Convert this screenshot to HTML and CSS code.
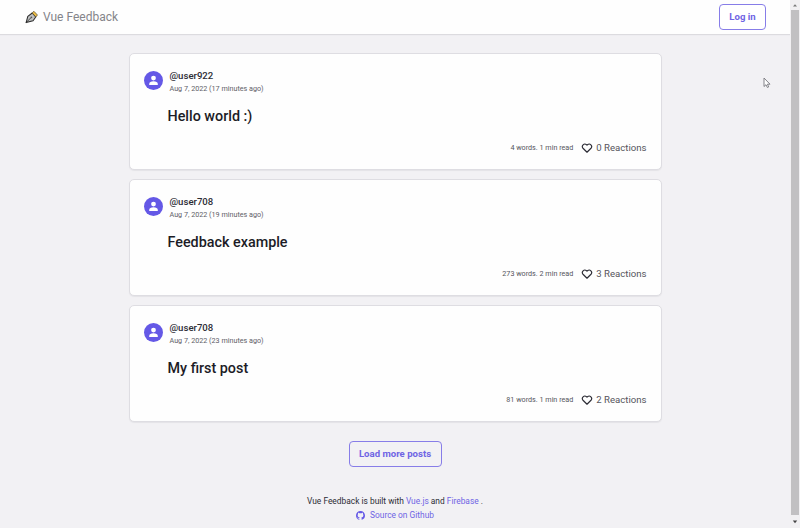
FILE: index.html
```html
<!DOCTYPE html>
<html lang="en">
<head>
<meta charset="utf-8">
<title>Vue Feedback</title>
<link rel="stylesheet" href="styles.css">
</head>
<body>
<svg class="defs" width="0" height="0">
  <symbol id="user" viewBox="0 0 19 19">
    <circle cx="9.5" cy="9.5" r="9.5" fill="#6458e6"/>
    <circle cx="9.5" cy="7.1" r="2.4" fill="#fff"/>
    <path d="M5.2 13.9v-1c0-1.6 1.8-2.6 4.3-2.6s4.3 1 4.3 2.6v1z" fill="#fff"/>
  </symbol>
  <symbol id="heart" viewBox="0 0 24 24">
    <path d="M12 20.500 4 12.500A5 5 0 0 1 11 5.400L12 6.400l1-1a5 5 0 0 1 7 7.100z" fill="none" stroke="#2c2c35" stroke-width="2.300" stroke-linejoin="round"/>
  </symbol>
</svg>
<div class="app">
  <div class="page">
    <header class="header">
      <a class="brand">
        <svg class="logo" viewBox="0 0 16 16">
          <path d="M1.300 14.400 3.200 7.200 8.300 3.400 12.300 8 9.200 12.300z" fill="#bfc1c2" stroke="#2b2b2b" stroke-width="1.200" stroke-linejoin="round"/>
          <path d="M8.200 3.300 10.200 1.500 14.200 5.700 12.500 7.900z" fill="#f5c344" stroke="#4b4330" stroke-width=".8" stroke-linejoin="round"/>
          <path d="M1.500 14.200 7 8.600" stroke="#2b2b2b" stroke-width=".9"/>
          <circle cx="7.300" cy="8.300" r="1" fill="#555"/>
        </svg>
        <span>Vue Feedback</span>
      </a>
      <button class="btn login">Log in</button>
    </header>
    <main class="feed">
      <article class="card">
        <div class="author">
          <svg class="avatar"><use href="#user"/></svg>
          <div class="meta"><div class="name">@user922</div><div class="date">Aug 7, 2022 (17 minutes ago)</div></div>
        </div>
        <h2>Hello world :)</h2>
        <div class="stats"><span class="words">4 words. 1 min read</span><svg class="heart"><use href="#heart"/></svg><span class="reactions">0 Reactions</span></div>
      </article>
      <article class="card">
        <div class="author">
          <svg class="avatar"><use href="#user"/></svg>
          <div class="meta"><div class="name">@user708</div><div class="date">Aug 7, 2022 (19 minutes ago)</div></div>
        </div>
        <h2>Feedback example</h2>
        <div class="stats"><span class="words">273 words. 2 min read</span><svg class="heart"><use href="#heart"/></svg><span class="reactions">3 Reactions</span></div>
      </article>
      <article class="card">
        <div class="author">
          <svg class="avatar"><use href="#user"/></svg>
          <div class="meta"><div class="name">@user708</div><div class="date">Aug 7, 2022 (23 minutes ago)</div></div>
        </div>
        <h2>My first post</h2>
        <div class="stats"><span class="words">81 words. 1 min read</span><svg class="heart"><use href="#heart"/></svg><span class="reactions">2 Reactions</span></div>
      </article>
      <button class="btn more">Load more posts</button>
    </main>
    <footer class="footer">
      <div>Vue Feedback is built with <a>Vue.js</a> and <a>Firebase</a> .</div>
      <a class="source">
        <svg class="github" viewBox="0 0 16 16"><path fill="#6458e6" d="M8 0C3.580 0 0 3.580 0 8c0 3.540 2.290 6.530 5.470 7.590.4.070.55-.17.55-.38 0-.19-.01-.82-.01-1.490-2.010.37-2.530-.49-2.690-.94-.09-.23-.48-.94-.82-1.130-.28-.15-.68-.52-.01-.53.63-.01 1.080.58 1.230.82.72 1.210 1.870.87 2.330.66.07-.52.28-.87.51-1.070-1.780-.2-3.640-.89-3.640-3.950 0-.87.31-1.590.82-2.150-.08-.2-.36-1.020.08-2.120 0 0 .67-.21 2.200.82.64-.18 1.320-.27 2-.27s1.360.09 2 .27c1.530-1.040 2.200-.82 2.200-.82.44 1.100.16 1.920.08 2.120.51.56.82 1.270.82 2.150 0 3.070-1.870 3.750-3.650 3.950.29.25.54.73.54 1.480 0 1.070-.01 1.930-.01 2.200 0 .21.15.46.55.38A8 8 0 0 0 16 8c0-4.420-3.580-8-8-8z"/></svg>
        <span>Source on Github</span>
      </a>
    </footer>
  </div>
  <div class="scrollbar">
    <svg class="arrow" viewBox="0 0 10 10"><path d="M3 6.500 5 4.200 7 6.500z" fill="#777"/></svg>
    <div class="thumb"></div>
    <svg class="arrow down" viewBox="0 0 10 10"><path d="M2.800 3.500h4.400L5 6.200z" fill="#444"/></svg>
  </div>
</div>
<svg class="cursor" viewBox="0 0 8 12"><path d="M1 1v8.500l2-1.800 1.400 2.800 1.300-.6-1.300-2.700H7z" fill="#fff" stroke="#77777d" stroke-width=".9"/></svg>
</body>
</html>
```
FILE: styles.css
```css
* { box-sizing: border-box; }
body {
  margin: 0;
  height: 528px;
  overflow: hidden;
  background: #f2f1f4;
  color: #2c2c35;
  font-family: Roboto, sans-serif;
}
.defs { position: absolute; }
.app { display: flex; height: 528px; }
.page { width: 790px; display: flex; flex-direction: column; }
.header {
  height: 34px;
  flex: none;
  padding: 0 24px;
  display: flex;
  align-items: center;
  justify-content: space-between;
  background: #fefefe;
  box-shadow: 0 1px 1px #dcdbdf;
}
.brand { display: flex; align-items: center; gap: 4px; padding-left: 1px; font-size: 12px; font-weight: 400; color: #85858a; }
.logo { width: 14px; height: 14px; }
.btn {
  border: 1px solid #877de8;
  border-radius: 4px;
  background: transparent;
  padding: 0;
  color: #6f64e4;
  font: 700 9.6px/1 Roboto, sans-serif;
  height: 26px;
}
.login { width: 47px; background: #fff; }
.feed {
  width: 533px;
  margin: 19px auto 0;
  display: flex;
  flex-direction: column;
  gap: 9px;
}
.card {
  height: 117px;
  padding: 15px 14px 0;
  border: 1px solid #dedde2;
  border-radius: 5px;
  background: #fefefe;
  box-shadow: 0 1px 1px #e4e3e7;
}
.author { display: flex; gap: 7px; }
.avatar { width: 19px; height: 19px; margin-top: 2px; }
.name { font-size: 9.6px; line-height: 14px; font-weight: 500; }
.date { font-size: 7.2px; line-height: 11px; color: #606067; }
.card h2 { margin: 13px 0 0 24px; font-size: 14.35px; line-height: 20px; font-weight: 500; color: #1c1c26; }
.stats { height: 14px; margin-top: 13px; display: flex; align-items: center; justify-content: flex-end; color: #55555c; }
.words { font-size: 7.2px; }
.heart { width: 12px; height: 12px; margin: 1px 3px 0 8px; }
.reactions { font-size: 9.6px; }
.more { width: 93px; align-self: center; margin-top: 10px; }
.footer { margin-top: 27px; font-size: 8.4px; line-height: 14px; text-align: center; }
.footer a { color: #6f64e4; }
.footer .source { display: flex; justify-content: center; align-items: center; gap: 5px; }
.github { width: 9px; height: 9px; }
.scrollbar { width: 10px; display: flex; flex-direction: column; align-items: center; background: #f1f0f2; }
.arrow { width: 10px; height: 10px; flex: none; }
.thumb { width: 8px; height: 505px; background: #c1c0c2; }
.down { margin-top: 2px; }
.cursor { position: absolute; left: 763px; top: 77px; width: 8px; height: 12px; }
```
